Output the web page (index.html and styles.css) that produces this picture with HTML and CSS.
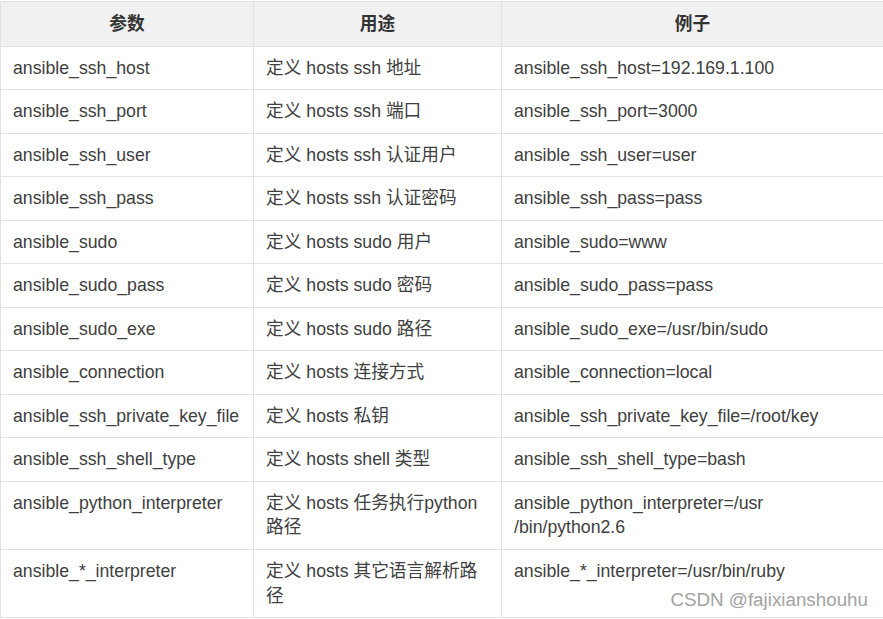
FILE: index.html
```html
<!DOCTYPE html>
<html lang="zh">
<head>
<meta charset="utf-8">
<title>ansible 参数</title>
<link rel="stylesheet" href="styles.css">
</head>
<body>
<div class="wrap">
<table class="params">
<colgroup><col class="c1"><col class="c2"><col class="c3"></colgroup>
<thead>
<tr><th>参数</th><th>用途</th><th>例子</th></tr>
</thead>
<tbody>
<tr><td>ansible_ssh_host</td><td>定义 hosts ssh 地址</td><td>ansible_ssh_host=192.169.1.100</td></tr>
<tr><td>ansible_ssh_port</td><td>定义 hosts ssh 端口</td><td>ansible_ssh_port=3000</td></tr>
<tr><td>ansible_ssh_user</td><td>定义 hosts ssh 认证用户</td><td>ansible_ssh_user=user</td></tr>
<tr><td>ansible_ssh_pass</td><td>定义 hosts ssh 认证密码</td><td>ansible_ssh_pass=pass</td></tr>
<tr><td>ansible_sudo</td><td>定义 hosts sudo 用户</td><td>ansible_sudo=www</td></tr>
<tr><td>ansible_sudo_pass</td><td>定义 hosts sudo 密码</td><td>ansible_sudo_pass=pass</td></tr>
<tr><td>ansible_sudo_exe</td><td>定义 hosts sudo 路径</td><td>ansible_sudo_exe=/usr/bin/sudo</td></tr>
<tr><td>ansible_connection</td><td>定义 hosts 连接方式</td><td>ansible_connection=local</td></tr>
<tr><td>ansible_ssh_private_key_file</td><td>定义 hosts 私钥</td><td>ansible_ssh_private_key_file=/root/key</td></tr>
<tr><td>ansible_ssh_shell_type</td><td>定义 hosts shell 类型</td><td>ansible_ssh_shell_type=bash</td></tr>
<tr><td>ansible_python_interpreter</td><td>定义 hosts 任务执行python<br>路径</td><td>ansible_python_interpreter=/usr<br>/bin/python2.6</td></tr>
<tr><td>ansible_*_interpreter</td><td>定义 hosts 其它语言解析路<br>径</td><td>ansible_*_interpreter=/usr/bin/ruby</td></tr>
</tbody>
</table>
<div class="watermark">CSDN @fajixianshouhu</div>
</div>
</body>
</html>
```
FILE: styles.css
```css
html, body {
  margin: 0;
  padding: 0;
  background: #ffffff;
}
body {
  padding-top: 1px;
  font-family: "Liberation Sans", Arial, "Noto Sans CJK SC", sans-serif;
  color: #404040;
}
.wrap {
  position: relative;
  width: 883px;
}
.params {
  width: 883px;
  border-collapse: collapse;
  table-layout: fixed;
  font-size: 17.7px;
  line-height: 24.8px;
}
.c1 { width: 253px; }
.c2 { width: 248px; }
.c3 { width: 382px; }
.params th,
.params td {
  border: 1px solid #e2e2e2;
  padding: 9px 12px 8.7px;
  text-align: left;
  vertical-align: top;
  white-space: nowrap;
}
.params th {
  background: #f1f1f1;
  text-align: center;
  font-weight: bold;
  color: #333333;
  padding-top: 9.5px;
  padding-bottom: 9.5px;
}
.watermark {
  position: absolute;
  right: 15px;
  bottom: 6px;
  font-size: 18.8px;
  color: #a3a3a3;
  line-height: 24px;
}
```
